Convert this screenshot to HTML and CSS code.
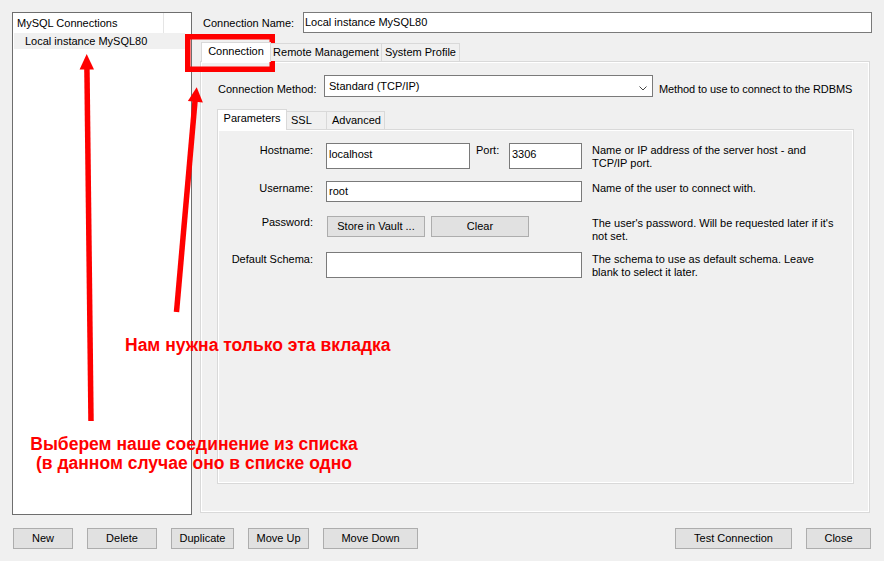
FILE: index.html
```html
<!DOCTYPE html>
<html>
<head>
<meta charset="utf-8">
<title>Manage Server Connections</title>
<link rel="stylesheet" href="styles.css">
</head>
<body>
<div class="window">
  <div class="main">
    <div class="list">
      <div class="list-head">
        <div class="list-col">MySQL Connections</div>
        <div class="list-col2"></div>
      </div>
      <div class="list-row selected">Local instance MySQL80</div>
    </div>
    <div class="right">
      <div class="name-row">
        <div class="name-label">Connection Name:</div>
        <input class="field name-field" type="text" value="Local instance MySQL80">
      </div>
      <div class="tabs outer-tabs">
        <div class="tab active w-conn">Connection</div>
        <div class="tab w-remote">Remote Management</div>
        <div class="tab w-system">System Profile</div>
      </div>
      <div class="pane outer">
        <div class="method-row">
          <div class="method-label">Connection Method:</div>
          <div class="select">
            <span class="select-text">Standard (TCP/IP)</span>
            <svg class="chev" width="8" height="5" viewBox="0 0 8 5"><polyline points="0.5,0.5 4,4 7.5,0.5" fill="none" stroke="#444" stroke-width="1"/></svg>
          </div>
          <div class="method-desc">Method to use to connect to the RDBMS</div>
        </div>
        <div class="tabs inner-tabs">
          <div class="tab active w-params">Parameters</div>
          <div class="tab w-ssl">SSL</div>
          <div class="tab w-adv">Advanced</div>
        </div>
        <div class="pane inner">
          <div class="form">
            <div class="f-label">Hostname:</div>
            <div class="f-field host-row">
              <input class="field tall host" type="text" value="localhost">
              <div class="port-label">Port:</div>
              <input class="field tall port" type="text" value="3306">
            </div>
            <div class="f-desc">Name or IP address of the server host - and<br>TCP/IP port.</div>

            <div class="f-label">Username:</div>
            <div class="f-field"><input class="field short wide" type="text" value="root"></div>
            <div class="f-desc">Name of the user to connect with.</div>

            <div class="f-label pw">Password:</div>
            <div class="f-field pw-row">
              <button class="btn vault">Store in Vault ...</button>
              <button class="btn clear">Clear</button>
            </div>
            <div class="f-desc">The user's password. Will be requested later if it's<br>not set.</div>

            <div class="f-label">Default Schema:</div>
            <div class="f-field"><input class="field tall wide" type="text" value=""></div>
            <div class="f-desc">The schema to use as default schema. Leave<br>blank to select it later.</div>
          </div>
        </div>
      </div>
    </div>
  </div>
  <div class="footer">
    <button class="btn b-new">New</button>
    <button class="btn b-delete">Delete</button>
    <button class="btn b-dup">Duplicate</button>
    <button class="btn b-up">Move Up</button>
    <button class="btn b-down">Move Down</button>
    <button class="btn b-test">Test Connection</button>
    <button class="btn b-close">Close</button>
  </div>
</div>

<svg class="annot" width="884" height="561" viewBox="0 0 884 561">
  <rect x="187.75" y="36.75" width="84.5" height="32.5" fill="none" stroke="#ff0000" stroke-width="5.5"/>
  <line x1="91" y1="421" x2="86.9" y2="66" stroke="#ff0000" stroke-width="5.5"/>
  <polygon points="86.7,54 94,69.5 79.6,69.5" fill="#ff0000"/>
  <line x1="176.5" y1="312" x2="195.2" y2="99" stroke="#ff0000" stroke-width="5.5"/>
  <polygon points="196.7,87.3 202.9,102.4 187.9,101.1" fill="#ff0000"/>
</svg>
<div class="note note-tab">Нам нужна только эта вкладка</div>
<div class="note note-list">Выберем наше соединение из списка<br>(в данном случае оно в списке одно</div>
</body>
</html>
```

FILE: styles.css
```css
* { box-sizing: border-box; }
html, body { margin: 0; padding: 0; }
body {
  width: 884px;
  height: 561px;
  overflow: hidden;
  position: relative;
  background: #f0f0f0;
  font-family: "Liberation Sans", Arial, sans-serif;
  font-size: 11px;
  line-height: 13px;
  color: #000;
}

.window {
  display: flex;
  flex-direction: column;
  height: 561px;
  padding: 12px 12px 0;
}

.main {
  display: flex;
  height: 503px;
}

/* connections list */
.list {
  flex: 0 0 180px;
  width: 180px;
  border: 1px solid #6e6e6e;
  background: #fff;
}
.list-head {
  display: flex;
  height: 20px;
}
.list-col {
  width: 151px;
  border-right: 1px solid #e5e5e5;
  padding: 4px 0 0 4px;
  white-space: nowrap;
}
.list-col2 { flex: 1; }
.list-row {
  margin: 0 6px 0 1px;
  height: 16px;
  padding: 2px 0 0 11px;
  white-space: nowrap;
}
.list-row.selected { background: #f0f0f0; }

/* right side */
.right {
  flex: 1 1 0;
  min-width: 0;
  margin-left: 8px;
  display: flex;
  flex-direction: column;
}
.name-row {
  display: flex;
  height: 21px;
}
.name-label {
  flex: 0 0 103px;
  padding: 5px 0 0 3px;
  white-space: nowrap;
}

.field {
  font: inherit;
  line-height: 13px;
  color: #000;
  background: #fff;
  border: 1px solid #7a7a7a;
  border-radius: 0;
  margin: 0;
  outline: none;
  height: 21px;
  padding: 2px 2px 4px;
  min-width: 0;
}
.field.tall {
  height: 26px;
  padding: 3px 2px 8px;
}
.name-field {
  flex: 1 1 0;
  padding-left: 1px;
}

/* tabs */
.tabs {
  display: flex;
  align-items: flex-end;
  position: relative;
  z-index: 1;
}
.outer-tabs {
  margin-top: 9px;
  height: 19px;
  padding-left: 1px;
}
.inner-tabs {
  margin-top: 12px;
  height: 20px;
}
.tab {
  flex: 0 0 auto;
  height: 18px;
  border: 1px solid #d9d9d9;
  border-bottom: none;
  background: #f0f0f0;
  padding-top: 2px;
  text-align: center;
  white-space: nowrap;
  margin-left: -1px;
}
.tab:first-child { margin-left: 0; }
.tab.active {
  background: #fff;
  margin-bottom: -1px;
  position: relative;
  z-index: 2;
}
.outer-tabs .tab.active { height: 20px; }
.inner-tabs .tab.active { height: 21px; }
.w-conn { width: 70px; }
.w-remote { width: 112px; }
.w-system { width: 79px; }
.w-params { width: 70px; }
.w-ssl { width: 41px; text-align: left; padding-left: 4px; }
.w-adv { width: 59px; padding-left: 2px; }

.pane {
  border: 1px solid #d9d9d9;
  background: #f0f0f0;
  box-shadow: inset 0 0 0 1px #fff;
}
.outer {
  height: 452px;
  margin-right: 2px;
  padding: 13px 15px 28px 16px;
  display: flex;
  flex-direction: column;
}

.method-row {
  display: flex;
  height: 22px;
  padding-left: 1px;
}
.method-label {
  flex: 0 0 106px;
  padding-top: 8px;
  white-space: nowrap;
}
.select {
  flex: 0 0 329px;
  height: 22px;
  border: 1px solid #7a7a7a;
  background: #fff;
  display: flex;
  align-items: flex-start;
  justify-content: space-between;
  padding: 4px 5px 0 4px;
}
.chev { margin-top: 6px; }
.method-desc {
  margin-left: 6px;
  padding-top: 8px;
  white-space: nowrap;
  letter-spacing: -0.1px;
}

.inner {
  flex: 1;
  padding-top: 13px;
}

.form {
  display: grid;
  grid-template-columns: 108px 266px 1fr;
  grid-template-rows: 38px 35px 36px 26px;
  align-items: start;
}
.f-label {
  text-align: right;
  padding: 1px 13px 0 0;
  white-space: nowrap;
}
.f-label.pw { padding-top: 0; }
.f-desc {
  padding-top: 1px;
  white-space: nowrap;
}
.host-row {
  display: flex;
  width: 256px;
}
.host { flex: 0 0 144px; width: 144px; }
.port-label {
  flex: 0 0 33px;
  margin-left: 6px;
  padding-top: 1px;
}
.port { flex: 0 0 73px; width: 73px; }
.wide { width: 256px; }

.pw-row { display: flex; }

.btn {
  height: 21px;
  border: 1px solid #adadad;
  background: #e1e1e1;
  font: inherit;
  line-height: 13px;
  color: #000;
  padding: 0;
  margin: 0;
  border-radius: 0;
  text-align: center;
  white-space: nowrap;
  flex: 0 0 auto;
}
.vault { width: 98px; margin-left: 1px; }
.clear { width: 98px; margin-left: 6px; }

/* footer */
.footer {
  display: flex;
  gap: 14px;
  margin-top: 13px;
  padding: 0 1px;
}
.b-new { width: 60px; }
.b-delete { width: 70px; }
.b-dup { width: 63px; }
.b-up { width: 61px; }
.b-down { width: 95px; }
.b-test { width: 117px; margin-left: auto; }
.b-close { width: 65px; }

/* annotations drawn on top of the screenshot */
.annot {
  position: absolute;
  left: 0;
  top: 0;
  pointer-events: none;
}
.note {
  position: absolute;
  color: #ff0000;
  font-family: "Liberation Sans", Arial, sans-serif;
  font-weight: bold;
  font-size: 17.5px;
  line-height: 18.5px;
  white-space: nowrap;
}
.note-tab {
  left: 125px;
  top: 336px;
}
.note-list {
  left: 14px;
  top: 435px;
  width: 360px;
  text-align: center;
}
```
